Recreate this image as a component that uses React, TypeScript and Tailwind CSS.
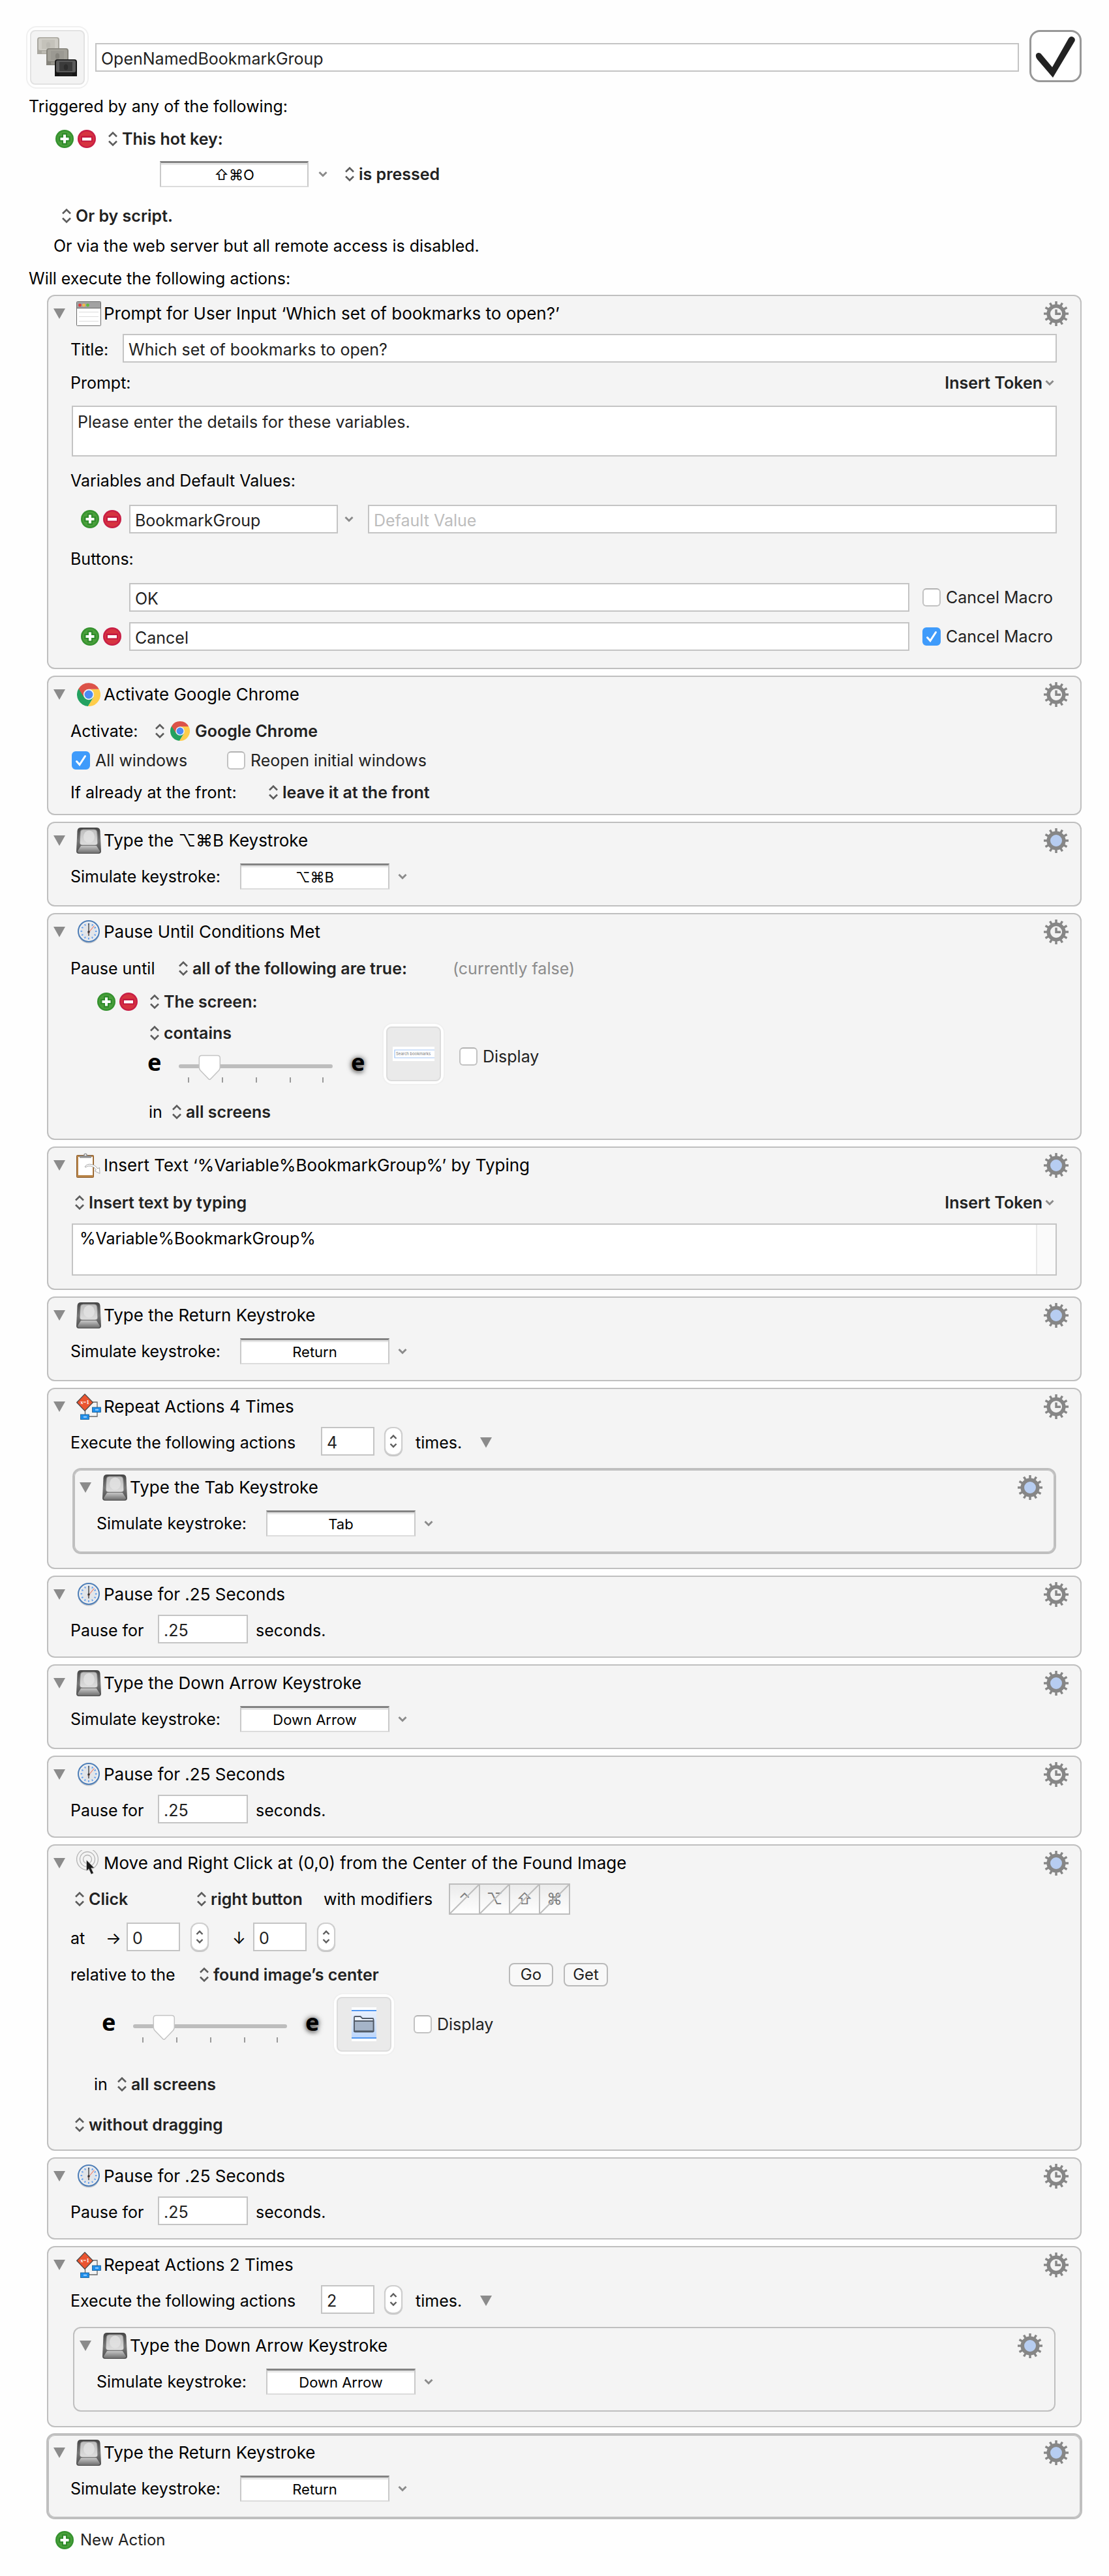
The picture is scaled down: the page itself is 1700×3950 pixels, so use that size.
import { useId, useState, type ReactNode } from "react";

/* ---------- icons ---------- */

function PlusIcon() {
  return (
    <svg viewBox="0 0 28 28" className="block size-7">
      <circle cx="14" cy="14" r="14" fill="#35922f" />
      <circle cx="14" cy="14" r="11.5" fill="#4a9f3b" />
      <path d="M10 5h8v5h5v8h-5v5h-8v-5H5v-8h5z" fill="#2f8b2b" />
      <path d="M12 7.500h4V12h4.500v4H16v4.500h-4V16H7.500v-4H12z" fill="#fff" />
    </svg>
  );
}

function MinusIcon() {
  return (
    <svg viewBox="0 0 28 28" className="block size-7">
      <circle cx="14" cy="14" r="14" fill="#c81e45" />
      <circle cx="14" cy="14" r="11.500" fill="#d63440" />
      <rect x="5" y="9.500" width="18" height="9" fill="#c4173f" />
      <rect x="7" y="12" width="14" height="4.500" fill="#fff" />
    </svg>
  );
}

function UpDown({ small = false }: { small?: boolean }) {
  return (
    <svg
      viewBox="0 0 16 24"
      className={small ? "h-8 w-4" : "h-6 w-4 shrink-0"}
      fill="none"
      stroke="#5c5c5c"
      strokeWidth={small ? 2.4 : 2.600}
    >
      <path d={small ? "M3.500 8 8 3.500 12.500 8M3.500 16 8 20.500 12.500 16" : "M2 8.500 8 2.500 14 8.500M2 15.500 8 21.500 14 15.500"} />
    </svg>
  );
}

function Chevron() {
  return (
    <svg viewBox="0 0 14 10" className="h-2.5 w-3.5 shrink-0" fill="none" stroke="#8b8b8b" strokeWidth="3">
      <path d="M1.500 2 7 7.500 12.500 2" />
    </svg>
  );
}

function Triangle() {
  return (
    <svg viewBox="0 0 18 16" className="h-4 w-[18px]">
      <path d="M0 0h18L9 16z" fill="#8b8b8b" />
    </svg>
  );
}

const TEETH = [0, 30, 60, 90, 120, 150, 180, 210, 240, 270, 300, 330];

function Gear({ timed }: { timed: boolean }) {
  return (
    <svg viewBox="0 0 38 38" className="block size-[38px]">
      {TEETH.map((a) => (
        <rect key={a} x="17.300" y="0" width="3.400" height="8" fill="#868686" transform={`rotate(${a} 19 19)`} />
      ))}
      <circle cx="19" cy="19" r="11.800" fill={timed ? "#f2f2f2" : "#b7cdf1"} stroke="#868686" strokeWidth="5.600" />
      {timed && <path d="M19 12.500V19.300h7" fill="none" stroke="#868686" strokeWidth="3.400" />}
    </svg>
  );
}

function WindowIcon() {
  return (
    <svg viewBox="0 0 38 38" className="size-[38px]">
      <rect x="0.500" y="0.500" width="37" height="37" rx="1" fill="#fff" stroke="#6d6d6d" />
      <path d="M1 1h36v9.500H1z" fill="#a2a2a2" />
      <path d="M1 10.500h36" stroke="#666" />
      <circle cx="5.500" cy="6" r="2.400" fill="#e0393b" />
      <circle cx="11.500" cy="6" r="2.400" fill="#f1b94a" />
      <circle cx="17.500" cy="6" r="2.400" fill="#5fbb3c" />
      <path d="M4 16.500h30M4 23.500h30M4 30.500h30" stroke="#dcdcdc" strokeWidth="1.200" />
    </svg>
  );
}

function ChromeIcon({ small = false }: { small?: boolean }) {
  return (
    <svg viewBox="0 0 36 36" className={small ? "size-[30px] shrink-0" : "size-9"}>
      <path d="M18 18 2.400 9A18 18 0 0 0 17 36l8.500-14z" fill="#23a160" />
      <path d="M18 9.700h15.900A18 18 0 0 1 17 36l8.500-14z" fill="#fecd4b" />
      <path d="M2.400 9 10.500 21.500 18 9.700h15.800A18 18 0 0 0 2.400 9z" fill="#dc5248" />
      <circle cx="18" cy="18" r="8.200" fill="#f5f5f5" />
      <circle cx="18" cy="18" r="6.500" fill="#4c8bf5" />
    </svg>
  );
}

function KeyIcon() {
  const id = useId();
  return (
    <svg viewBox="0 0 38 40" className="h-10 w-[38px]">
      <defs>
        <linearGradient id={id + "a"} x1="0" y1="0" x2="0" y2="1">
          <stop offset="0" stopColor="#454545" />
          <stop offset="0.500" stopColor="#777" />
          <stop offset="1" stopColor="#4c4c4c" />
        </linearGradient>
        <linearGradient id={id + "b"} x1="0" y1="0" x2="0" y2="1">
          <stop offset="0" stopColor="#bdbdbd" />
          <stop offset="1" stopColor="#dedede" />
        </linearGradient>
        <linearGradient id={id + "c"} x1="0" y1="0" x2="0" y2="1">
          <stop offset="0" stopColor="#c6c6c6" />
          <stop offset="1" stopColor="#6e6e6e" />
        </linearGradient>
      </defs>
      <path d="M7 0h24q5 0 5.500 5L38 36q0 4-4 4H4q-4 0-4-4L1.500 5Q2 0 7 0z" fill={`url(#${id}a)`} />
      <path d="M7 28h24l5 8q0 3-3 3H5q-3 0-3-3z" fill={`url(#${id}c)`} />
      <path d="M10.500 3h17q4 0 4.300 4l1 15.500q0 4.500-4.500 4.500H9.700q-4.500 0-4.500-4.500l1-15.500q.300-4 4.300-4z" fill={`url(#${id}b)`} stroke="#8d8d8d" />
      <ellipse cx="19.500" cy="14" rx="8.500" ry="9.500" fill="#e4e4e4" opacity="0.800" />
    </svg>
  );
}

function ClockIcon() {
  return (
    <svg viewBox="0 0 38 38" className="size-[38px]">
      <ellipse cx="19" cy="20" rx="16.500" ry="16.500" fill="#c3c7cd" />
      <circle cx="19" cy="18" r="16" fill="#e2e5e9" stroke="#4f7fb8" strokeWidth="2" />
      <circle cx="19" cy="18" r="14" fill="none" stroke="#f9f9f9" />
      {TEETH.map((a) => (
        <rect key={a} x="18.200" y="5.500" width="1.800" height="2.600" fill="#5d9df0" transform={`rotate(${a} 19 18)`} />
      ))}
      <path d="M19 6v19" stroke="#444" strokeWidth="1.400" />
      <path d="M17.500 21.500 27.500 9.500" stroke="#f07a62" strokeWidth="1.100" />
      <circle cx="19" cy="19" r="1.800" fill="#333" />
    </svg>
  );
}

function ClipboardIcon() {
  return (
    <svg viewBox="0 0 38 38" className="size-[38px]">
      <rect x="0.500" y="3.500" width="26" height="34" rx="1" fill="#b88447" stroke="#8a5a2a" />
      <rect x="3" y="6" width="22" height="28" fill="#fff" />
      <path d="M5 4h6q0-3.500 3-3.500T17 4h6v3.500H5z" fill="#8e8e8e" />
      <circle cx="14" cy="3" r="1.300" fill="#eee" />
      <path d="M13 21q4-5 10-3.500 7 1.500 9.500 6.500l3-1.500.500 9-8-4 2.500-1.500q-3-5-8-6-5-1-8.500 2z" fill="#fff" stroke="#a7a7a7" />
    </svg>
  );
}

function FlowIcon() {
  return (
    <svg viewBox="0 0 38 40" className="h-10 w-[38px]">
      <path d="M13.500 26v7M25 13h7v22H19" fill="none" stroke="#666" strokeWidth="1.300" />
      <path d="M13 0.700 25.500 13.500 13 26.500 0.700 13.500z" fill="#ea5430" stroke="#444" strokeWidth="1.200" />
      <text x="13" y="16" textAnchor="middle" fontSize="8.500" fontFamily="Liberation Serif, serif" fontWeight="700" fill="#fff">
        x=1
      </text>
      <rect x="24.500" y="21" width="13" height="7.500" fill="#1f8eea" stroke="#15598f" strokeWidth="0.800" />
      <rect x="6.500" y="32" width="13" height="7.500" fill="#1f8eea" stroke="#15598f" strokeWidth="0.800" />
      <path d="M29 24.700h5M11 35.700h5" stroke="#9ad0ff" strokeWidth="2" />
    </svg>
  );
}

function ClickIcon() {
  return (
    <svg viewBox="0 0 38 40" className="h-10 w-[38px]">
      <g fill="none" stroke="#b4b4b4" strokeWidth="1.300">
        <circle cx="17" cy="14" r="6.500" />
        <circle cx="17" cy="14" r="11.500" />
        <circle cx="17" cy="14" r="16.400" />
      </g>
      <path d="M15.500 15v17l3.600-3.300 3.700 8.300 3.600-1.700-3.600-7.800h5z" fill="#1c1c1c" stroke="#f4f4f4" strokeWidth="0.500" />
    </svg>
  );
}

function MacroIcon() {
  const caps = [
    { x: 0, y: 0, base: "#a9a79f", face: "#cfcdc6", lip: "#bbb9b1", dot: "#bbb9b2" },
    { x: 14, y: 17, base: "#84827a", face: "#a3a199", lip: "#96948c", dot: "#87857e" },
    { x: 27, y: 34, base: "#161616", face: "#5b5b5b", lip: "#202020", dot: "#2c2c2c" },
  ];
  return (
    <svg viewBox="0 0 62 62" className="size-[62px]">
      {caps.map((c) => (
        <g key={c.x} transform={`translate(${c.x} ${c.y})`}>
          <path d="M4 0h26q4 0 4 4v22H0V4q0-4 4-4z" fill={c.base} />
          <rect x="2" y="1.500" width="30" height="18.500" rx="2.500" fill={c.face} />
          <rect x="7" y="4" width="20" height="14" fill={c.lip} opacity="0.550" />
          <rect x="7" y="21" width="20" height="4" fill={c.lip} />
          <ellipse cx="17" cy="12" rx="3.200" ry="4.500" fill={c.dot} />
        </g>
      ))}
    </svg>
  );
}

function FolderThumb() {
  return (
    <svg viewBox="0 0 38 52" className="h-[52px] w-[38px]">
      <defs>
        <linearGradient id="folderBg" x1="0" y1="0" x2="0" y2="1">
          <stop offset="0" stopColor="#eaf1fd" />
          <stop offset="1" stopColor="#bcd6fb" />
        </linearGradient>
      </defs>
      <path d="M0 0h38v52H0z" fill="#fff" />
      <path d="M0 5h38v42H0z" fill="url(#folderBg)" />
      <path d="M0 5h38M0 47h38" stroke="#4f95ef" strokeWidth="1.800" />
      <path d="M4 18v-2.500q0-1.500 1.500-1.500h8l3 3H32q1.500 0 1.500 1.500v18q0 1-1 1H5q-1 0-1-1z" fill="#eef4fd" stroke="#515a66" strokeWidth="1.800" />
      <path d="M4 21h29.500v15.500H4z" fill="#a5b4c8" stroke="#515a66" strokeWidth="1.800" />
    </svg>
  );
}

function SearchThumb() {
  return (
    <svg viewBox="0 0 64 22" className="h-[22px] w-16">
      <path d="M0 0h64v22H0z" fill="#fff" />
      <path d="M64 5H3v12h61" fill="none" stroke="#9fc3f5" strokeWidth="1.200" />
      <text x="5" y="13" fontSize="6" fontFamily="Inter, sans-serif" fill="#777">
        Search bookmarks
      </text>
    </svg>
  );
}

/* ---------- controls ---------- */

const BOX = "h-11 min-w-0 border-2 border-[#c4c4c4] bg-white px-[7px] pt-1 text-[25px] text-[#222] outline-none";

function TextBox({ label, value, placeholder, className = "" }: { label: string; value: string; placeholder?: string; className?: string }) {
  return <input type="text" aria-label={label} defaultValue={value} placeholder={placeholder} className={`${BOX} placeholder:text-[#bdbdbd] ${className}`} />;
}

function Popup({ value, label, icon }: { value: string; label: string; icon?: ReactNode }) {
  return (
    <span className="flex h-8 items-center gap-1.5">
      <UpDown />
      {icon}
      <select aria-label={label} defaultValue={value} className="h-8 appearance-none bg-transparent p-0 text-[25px] leading-8 font-semibold text-[#222] outline-none">
        <option value={value}>{value}</option>
      </select>
    </span>
  );
}

function AddRemove() {
  return (
    <span className="flex gap-1.5">
      <button type="button" aria-label="Add"><PlusIcon /></button>
      <button type="button" aria-label="Remove"><MinusIcon /></button>
    </span>
  );
}

function MenuButton({ label, className = "" }: { label: string; className?: string }) {
  return (
    <button type="button" aria-label={label} className={`flex h-8 items-center ${className}`}>
      <Chevron />
    </button>
  );
}

function InsertToken() {
  return (
    <button type="button" className="mr-1 flex h-8 items-center gap-1 text-[25px] leading-8 font-semibold text-[#222]">
      Insert Token
      <Chevron />
    </button>
  );
}

function Check({ label, checked = false }: { label: string; checked?: boolean }) {
  return (
    <label className="flex h-8 items-center gap-2 whitespace-nowrap text-[#222]">
      <span className="relative size-7 shrink-0">
        <input
          type="checkbox"
          defaultChecked={checked}
          className="peer block size-7 appearance-none rounded-md border-2 border-[#c2c2c2] border-t-[#b2b2b2] bg-white checked:border-[#3f9bfb] checked:bg-[#3f9bfb]"
        />
        <svg viewBox="0 0 28 28" className="pointer-events-none absolute inset-0 hidden peer-checked:block" fill="none" stroke="#fff" strokeWidth="3" strokeLinecap="round">
          <path d="M7.500 15.500 12 20.500 20.500 7.500" />
        </svg>
      </span>
      {label}
    </label>
  );
}

function KeyField({ value, className = "" }: { value: string; className?: string }) {
  return (
    <input
      type="text"
      aria-label="Keystroke"
      defaultValue={value}
      className={`border-2 border-t-[3px] border-[#c9c9c9] border-t-[#838383] border-b-[#dcdcdc] bg-white text-center text-[22px] text-black shadow-[inset_0_3px_0_#e6e6e6] outline-none ${className}`}
    />
  );
}

function Stepper() {
  return (
    <span className="relative flex h-11 w-7 justify-center rounded-xl border-2 border-[#cecece] bg-white shadow-[0_1px_1px_#bbb]">
      <span className="flex h-10 items-center"><UpDown small /></span>
      <button type="button" aria-label="Increase" className="absolute inset-x-0 top-0 h-1/2" />
      <button type="button" aria-label="Decrease" className="absolute inset-x-0 bottom-0 h-1/2" />
    </span>
  );
}

const TICKS = [15, 67, 119, 171, 221];

function FuzzSlider() {
  const [value, setValue] = useState(15);
  const x = 17 + (value / 100) * 202;
  return (
    <div className="flex items-start font-['Noto_Sans',sans-serif] text-4xl leading-[30px] font-bold text-black">
      <span className="w-12">e</span>
      <span className="relative h-[50px] w-[236px]">
        <svg viewBox="0 0 236 50" className="block h-[50px] w-[236px]">
          <rect x="0" y="18" width="236" height="6" rx="3" fill="#bdbdbd" />
          {TICKS.map((t) => (
            <rect key={t} x={t - 1} y="38" width="2" height="8" fill="#9a9a9a" />
          ))}
          <path
            d={`M${x - 12} 4.500h24q4 0 4 4v14q0 2-1.500 4.500L${x + 2} 40q-2 2.500-4 0L${x - 14.5} 27q-1.500-2.500-1.500-4.500v-14q0-4 4-4z`}
            fill="#fff"
            stroke="#c4c4c4"
            strokeWidth="1.500"
          />
        </svg>
        <input
          type="range"
          aria-label="Fuzziness"
          min={0}
          max={100}
          value={value}
          onChange={(e) => setValue(Number(e.target.value))}
          className="absolute inset-0 m-0 size-full opacity-0"
        />
      </span>
      <span className="ml-7 [text-shadow:0_0_8px_#555,0_2px_6px_#777]">e</span>
    </div>
  );
}

function ImageWell({ children, label, pale = false }: { children: ReactNode; label: string; pale?: boolean }) {
  return (
    <button type="button" aria-label={label} className="size-24 shrink-0 rounded-2xl border-2 border-[#f0f0f0] bg-white p-1">
      <span className={`flex size-full items-center justify-center rounded-lg border-2 ${pale ? "border-[#e2e2e2] bg-[#f3f3f3]" : "border-[#dcdcdc] bg-[#eaeaea]"}`}>
        {children}
      </span>
    </button>
  );
}

/* ---------- panels ---------- */

function Panel({ title, icon, timed = false, selected = false, children }: { title: string; icon: ReactNode; timed?: boolean; selected?: boolean; children: ReactNode }) {
  return (
    <section
      className={`rounded-xl border-2 border-[#bfbfbf] bg-[#f4f4f4] ${selected ? "shadow-[0_0_0_1px_#bfbfbf,inset_0_0_0_1px_#bfbfbf]" : ""}`}
    >
      <header className="flex h-[54px] items-center pr-[18px] pl-2">
        <button type="button" aria-label="Collapse" className="shrink-0"><Triangle /></button>
        <span className="ml-[17px] flex w-[38px] shrink-0 justify-center">{icon}</span>
        <h2 className="ml-1 flex-1 text-[26px] leading-8 whitespace-nowrap text-black">{title}</h2>
        <button type="button" aria-label="Action options"><Gear timed={timed} /></button>
      </header>
      <div className="px-[34px]">{children}</div>
    </section>
  );
}

function Keystroke({ title, value, selected }: { title: string; value: string; selected?: boolean }) {
  return (
    <Panel title={title} icon={<KeyIcon />} selected={selected}>
      <div className="flex items-center pt-2 pb-6">
        <span className="w-[260px]">Simulate keystroke:</span>
        <KeyField value={value} className="h-10 w-[229px]" />
        <MenuButton label="Special keys" className="ml-[13px]" />
      </div>
    </Panel>
  );
}

function Pause() {
  return (
    <Panel title="Pause for .25 Seconds" icon={<ClockIcon />} timed>
      <div className="flex items-center pt-1 pb-5">
        <span className="w-[134px] pt-1">Pause for</span>
        <TextBox label="Pause seconds" value=".25" className="w-[138px]" />
        <span className="ml-3 pt-1">seconds.</span>
      </div>
    </Panel>
  );
}

function Repeat({ count, children }: { count: string; children: ReactNode }) {
  return (
    <Panel title={`Repeat Actions ${count} Times`} icon={<FlowIcon />} timed>
      <div className="flex items-center pt-1">
        <span className="w-96 pt-1">Execute the following actions</span>
        <TextBox label="Repeat count" value={count} className="w-[82px]" />
        <span className="ml-[15px]"><Stepper /></span>
        <span className="ml-5 w-[99px] pt-1">times.</span>
        <button type="button" aria-label="Repeat options" className="pt-1"><Triangle /></button>
      </div>
      <div className="mx-1 pt-5 pb-[22px]">{children}</div>
    </Panel>
  );
}

function ModifierKey({ glyph, label }: { glyph: string; label: string }) {
  return (
    <button type="button" aria-label={label} className="relative flex h-12 w-12 items-center justify-center border-2 border-[#bdbdbd] bg-linear-to-b from-[#ebebeb] to-white text-2xl text-[#7d7d7d] not-first:-ml-0.5">
      {glyph}
      <svg viewBox="0 0 44 44" className="absolute inset-0 size-full" stroke="#bdbdbd" strokeWidth="2">
        <path d="M0 44 44 0" />
      </svg>
    </button>
  );
}

export default function App() {
  const [enabled, setEnabled] = useState(true);
  return (
    <main className="min-h-screen bg-[#fefefe] pt-10 pr-[42px] pb-8 pl-10 font-[Inter,'Noto_Sans',sans-serif] text-[25px] leading-8 text-black">
      <div className="flex items-center">
        <ImageWell label="Macro icon" pale><MacroIcon /></ImageWell>
        <TextBox label="Macro name" value="OpenNamedBookmarkGroup" className="ml-2.5 flex-1" />
        <label className="relative mt-1.5 ml-4 size-20 shrink-0 self-start">
          <input
            type="checkbox"
            aria-label="Macro enabled"
            checked={enabled}
            onChange={(e) => setEnabled(e.target.checked)}
            className="block size-20 appearance-none rounded-2xl border-[3px] border-[#989898] bg-white"
          />
          {enabled && (
            <svg viewBox="0 0 80 80" className="pointer-events-none absolute inset-0 size-full">
              <path d="M10 41q-1-5 3.500-6 3.500-.5 5.500 3L35 57 60 13q2.500-4 6.500-2.500 4.500 2 3 6.500L36 73 12 45q-1.500-2-2-4z" fill="#222" />
            </svg>
          )}
        </label>
      </div>

      <p className="mt-[11px] pl-1">Triggered by any of the following:</p>
      <div className="mt-[18px] flex h-8 items-center gap-[18px] pl-[45px]">
        <AddRemove />
        <Popup label="Trigger type" value="This hot key:" />
      </div>
      <div className="mt-[18px] flex items-center pl-[205px]">
        <KeyField value="⇧⌘O" className="h-10 w-[228px]" />
        <MenuButton label="Special keys" className="ml-[15px]" />
        <span className="ml-[26px]"><Popup label="Hot key event" value="is pressed" /></span>
      </div>
      <div className="mt-7 flex pl-[54px]">
        <Popup label="Script trigger" value="Or by script." />
      </div>
      <p className="mt-3.5 pl-[42px]">Or via the web server but all remote access is disabled.</p>
      <p className="mt-[18px] pl-1">Will execute the following actions:</p>

      <div className="mt-[9px] ml-8 flex flex-col gap-2.5">
        <Panel title="Prompt for User Input ‘Which set of bookmarks to open?’" icon={<WindowIcon />} timed>
          <div className="pt-1 pr-0.5 pb-[26px]">
            <label className="flex items-center">
              <span className="w-20 pt-1">Title:</span>
              <TextBox label="Title" value="Which set of bookmarks to open?" className="flex-1" />
            </label>
            <div className="mt-[15px] flex items-center justify-between">
              <label htmlFor="prompt-text">Prompt:</label>
              <InsertToken />
            </div>
            <div className="mt-[19px] pl-0.5">
              <textarea
                id="prompt-text"
                defaultValue="Please enter the details for these variables."
                className="block h-[78px] w-full resize-none border-2 border-[#c4c4c4] bg-white px-[7px] pt-[7px] text-[25px] leading-8 text-[#222] outline-none"
              />
            </div>
            <p className="mt-[21px]">Variables and Default Values:</p>
            <div className="mt-[21px] flex items-center pl-4">
              <AddRemove />
              <TextBox label="Variable name" value="BookmarkGroup" className="ml-3 w-80" />
              <MenuButton label="Choose variable" className="ml-2.5" />
              <TextBox label="Default value" value="" placeholder="Default Value" className="ml-[22px] flex-1" />
            </div>
            <p className="mt-[23px]">Buttons:</p>
            <div className="mt-[21px] flex items-center pl-[90px]">
              <TextBox label="First button" value="OK" className="flex-1" />
              <span className="ml-5 w-[206px]"><Check label="Cancel Macro" /></span>
            </div>
            <div className="mt-4 flex items-center pl-4">
              <AddRemove />
              <TextBox label="Second button" value="Cancel" className="ml-3 flex-1" />
              <span className="ml-5 w-[206px]"><Check label="Cancel Macro" checked /></span>
            </div>
          </div>
        </Panel>

        <Panel title="Activate Google Chrome" icon={<ChromeIcon />} timed>
          <div className="pt-[13px] pb-[17px]">
            <div className="flex items-center">
              <span className="w-[129px]">Activate:</span>
              <Popup label="Application" value="Google Chrome" icon={<span className="mx-0.5"><ChromeIcon small /></span>} />
            </div>
            <div className="mt-[13px] flex items-center pl-0.5">
              <span className="w-[238px]"><Check label="All windows" checked /></span>
              <Check label="Reopen initial windows" />
            </div>
            <div className="mt-[17px] flex items-center">
              <span className="w-[303px]">If already at the front:</span>
              <Popup label="When already at the front" value="leave it at the front" />
            </div>
          </div>
        </Panel>

        <Keystroke title="Type the ⌥⌘B Keystroke" value="⌥⌘B" />

        <Panel title="Pause Until Conditions Met" icon={<ClockIcon />} timed>
          <div className="pt-[13px] pb-[25px]">
            <div className="flex items-center">
              <span className="w-[165px]">Pause until</span>
              <Popup label="Condition mode" value="all of the following are true:" />
              <span className="ml-[70px] text-[#8c8c8c]">(currently false)</span>
            </div>
            <div className="mt-[19px] flex h-8 items-center gap-[18px] pl-[41px]">
              <AddRemove />
              <Popup label="Condition source" value="The screen:" />
            </div>
            <div className="mt-4 flex items-center pl-[118px]">
              <div className="w-[360px]">
                <span className="flex pl-[3px]"><Popup label="Condition test" value="contains" /></span>
                <div className="mt-3.5"><FuzzSlider /></div>
              </div>
              <ImageWell label="Search image"><SearchThumb /></ImageWell>
              <span className="ml-[22px] pt-2"><Check label="Display" /></span>
            </div>
            <div className="mt-[25px] flex items-center pl-[120px]">
              <span className="w-[35px]">in</span>
              <Popup label="Screen" value="all screens" />
            </div>
          </div>
        </Panel>

        <Panel title="Insert Text ‘%Variable%BookmarkGroup%’ by Typing" icon={<ClipboardIcon />}>
          <div className="pt-3.5 pr-0.5 pb-5">
            <div className="flex items-center justify-between pl-1.5">
              <Popup label="Insert method" value="Insert text by typing" />
              <InsertToken />
            </div>
            <div className="mt-4 ml-0.5 flex h-20 border-2 border-[#c4c4c4] bg-white">
              <textarea
                aria-label="Text to insert"
                defaultValue="%Variable%BookmarkGroup%"
                className="block min-w-0 flex-1 resize-none bg-transparent px-2.5 pt-[5px] text-[25px] leading-8 text-black outline-none"
              />
              <span className="w-[30px] border-l-2 border-[#e8e8e8] bg-[#fafafa]" />
            </div>
          </div>
        </Panel>

        <Keystroke title="Type the Return Keystroke" value="Return" />

        <Repeat count="4">
          <Keystroke title="Type the Tab Keystroke" value="Tab" selected />
        </Repeat>

        <Pause />
        <Keystroke title="Type the Down Arrow Keystroke" value="Down Arrow" />
        <Pause />

        <Panel title="Move and Right Click at (0,0) from the Center of the Found Image" icon={<ClickIcon />}>
          <div className="pt-1 pb-[22px]">
            <div className="flex items-center pl-1.5">
              <span className="w-[187px]"><Popup label="Mouse action" value="Click" /></span>
              <span className="w-[195px]"><Popup label="Mouse button" value="right button" /></span>
              <span className="w-48">with modifiers</span>
              <span className="flex">
                <ModifierKey glyph="⌃" label="Control" />
                <ModifierKey glyph="⌥" label="Option" />
                <ModifierKey glyph="⇧" label="Shift" />
                <ModifierKey glyph="⌘" label="Command" />
              </span>
            </div>
            <div className="mt-3 flex items-center">
              <span className="w-[54px] pt-1">at</span>
              <span className="w-8 pt-1">→</span>
              <TextBox label="Horizontal offset" value="0" className="w-[82px]" />
              <span className="ml-4"><Stepper /></span>
              <span className="ml-9 w-8 pt-1">↓</span>
              <TextBox label="Vertical offset" value="0" className="w-[82px]" />
              <span className="ml-4"><Stepper /></span>
            </div>
            <div className="mt-[18px] flex items-center gap-4">
              <span className="flex w-[656px] items-center">
                <span className="w-[197px]">relative to the</span>
                <Popup label="Relative position" value="found image’s center" />
              </span>
              <button type="button" className="h-9 w-[68px] rounded-lg border-2 border-[#b9b9b9] bg-[#f8f8f8] text-2xl leading-8 text-[#222]">Go</button>
              <button type="button" className="h-9 w-[68px] rounded-lg border-2 border-[#b9b9b9] bg-[#f8f8f8] text-2xl leading-8 text-[#222]">Get</button>
            </div>
            <div className="mt-2.5 flex items-center pl-12">
              <div className="w-[354px] pt-3.5"><FuzzSlider /></div>
              <ImageWell label="Search image"><FolderThumb /></ImageWell>
              <span className="ml-7"><Check label="Display" /></span>
            </div>
            <div className="mt-7 flex items-center pl-9">
              <span className="w-[35px]">in</span>
              <Popup label="Screen" value="all screens" />
            </div>
            <div className="mt-[30px] flex pl-1.5">
              <Popup label="Drag mode" value="without dragging" />
            </div>
          </div>
        </Panel>

        <Pause />

        <Repeat count="2">
          <Keystroke title="Type the Down Arrow Keystroke" value="Down Arrow" />
        </Repeat>

        <Keystroke title="Type the Return Keystroke" value="Return" selected />
      </div>

      <button type="button" className="mt-[17px] ml-[45px] flex h-8 items-center gap-2.5 text-2xl leading-8 text-[#222]">
        <PlusIcon />
        New Action
      </button>
    </main>
  );
}
